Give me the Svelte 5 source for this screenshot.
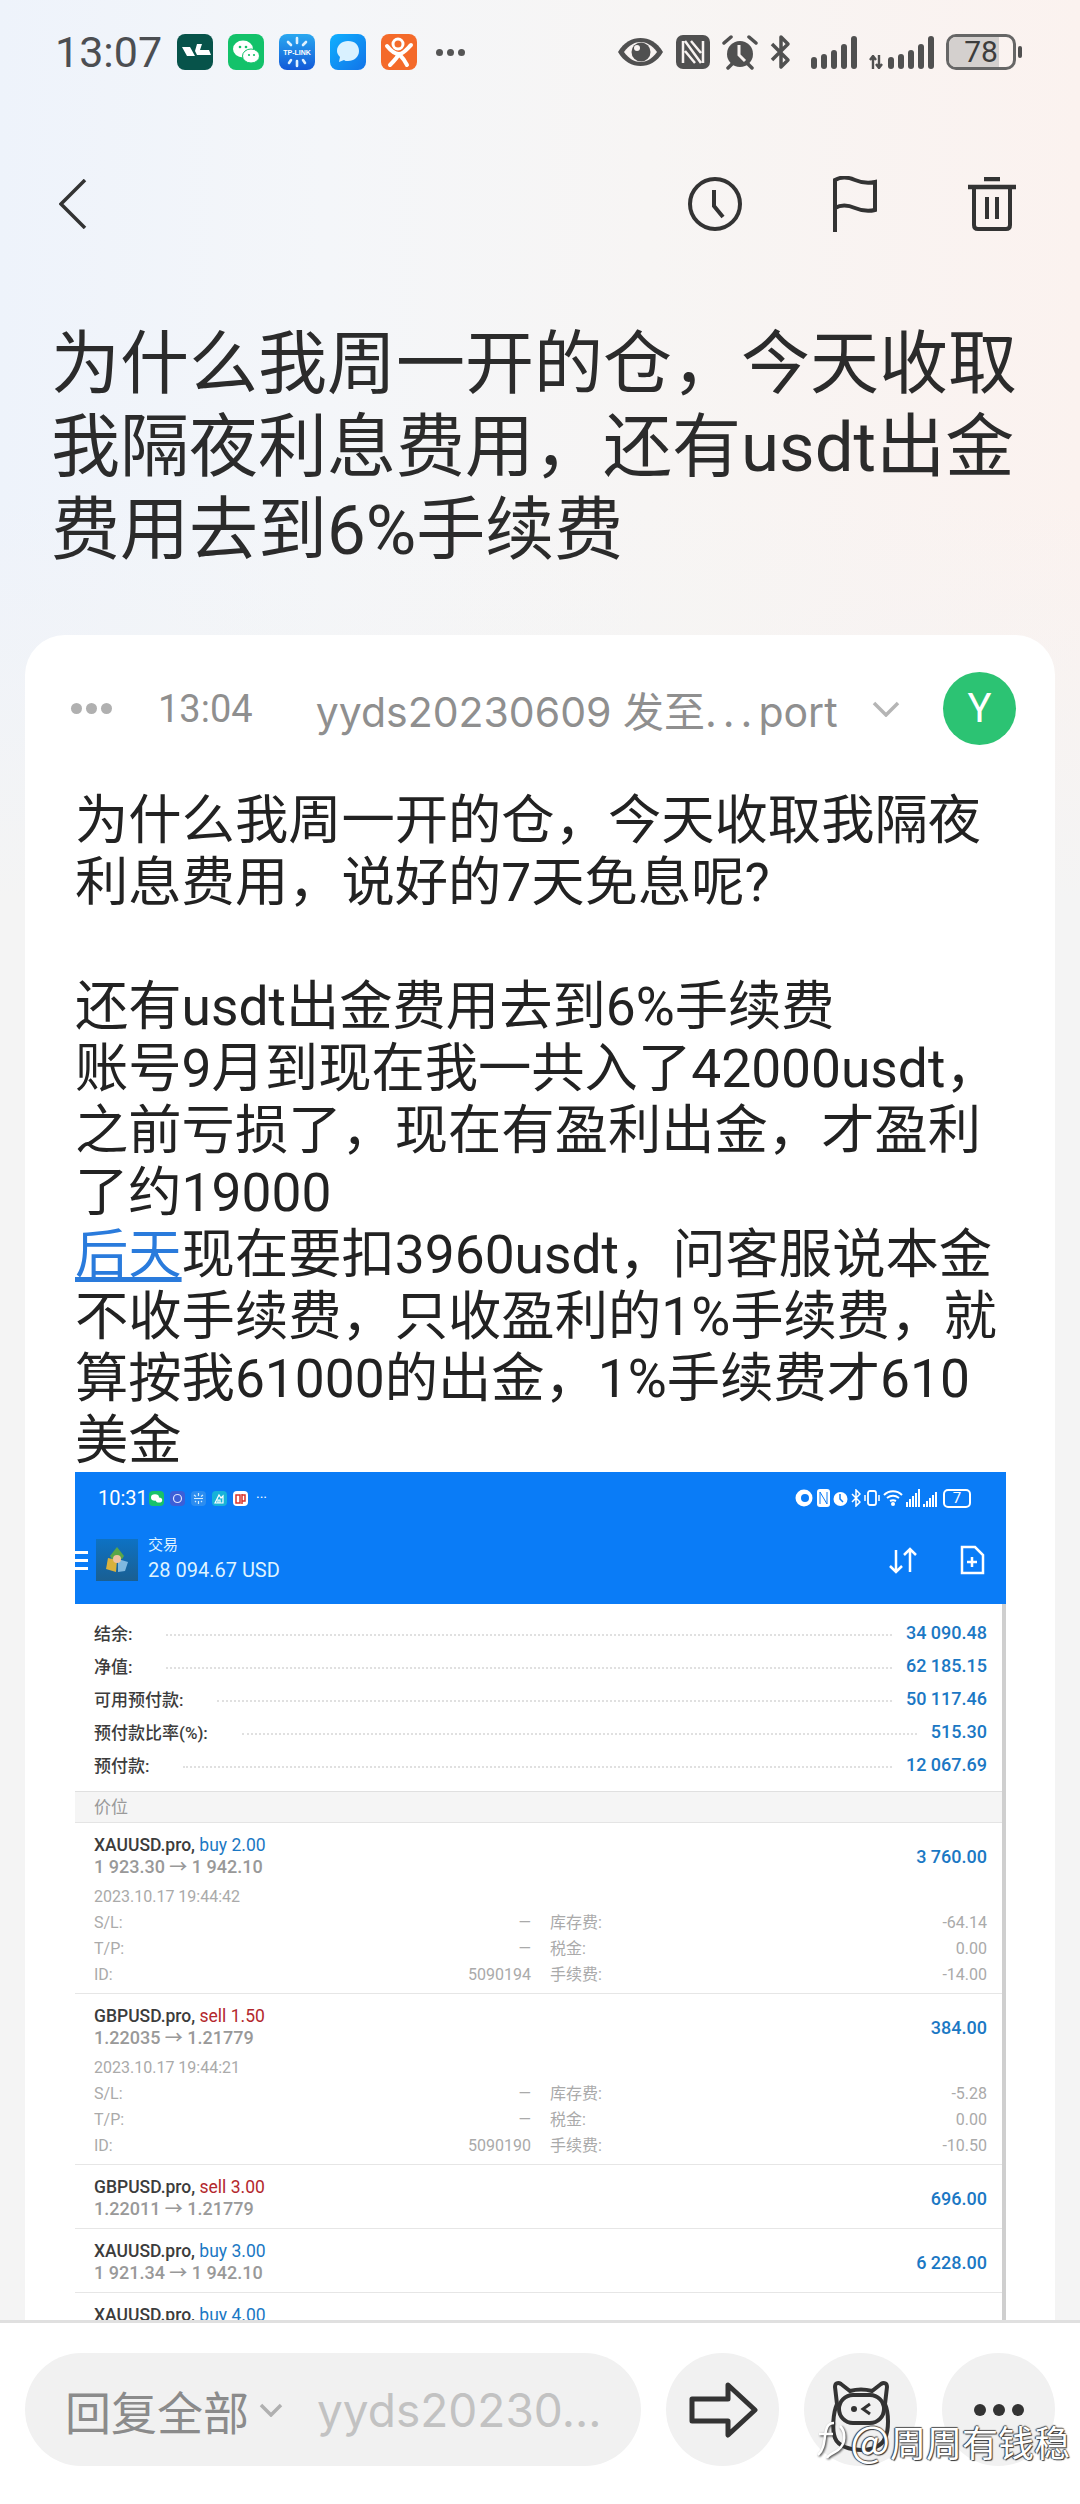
<script>
  const body = [
    '为什么我周一开的仓，今天收取我隔夜',
    '利息费用，说好的7天免息呢?',
    '',
    '还有usdt出金费用去到6%手续费',
    '账号9月到现在我一共入了42000usdt，',
    '之前亏损了，现在有盈利出金，才盈利',
    '了约19000'
  ]
  const bodyEnd = [
    '不收手续费，只收盈利的1%手续费，就',
    '算按我61000的出金，1%手续费才610',
    '美金'
  ]
  const summary = [
    ['结余:', '34 090.48'],
    ['净值:', '62 185.15'],
    ['可用预付款:', '50 117.46'],
    ['预付款比率(%):', '515.30'],
    ['预付款:', '12 067.69']
  ]
  const positions = [
    { sym: 'XAUUSD.pro,', side: 'buy', lot: '2.00', from: '1 923.30', to: '1 942.10', amount: '3 760.00',
      date: '2023.10.17 19:44:42', id: '5090194', swap: '-64.14', fee: '-14.00' },
    { sym: 'GBPUSD.pro,', side: 'sell', lot: '1.50', from: '1.22035', to: '1.21779', amount: '384.00',
      date: '2023.10.17 19:44:21', id: '5090190', swap: '-5.28', fee: '-10.50' },
    { sym: 'GBPUSD.pro,', side: 'sell', lot: '3.00', from: '1.22011', to: '1.21779', amount: '696.00' },
    { sym: 'XAUUSD.pro,', side: 'buy', lot: '3.00', from: '1 921.34', to: '1 942.10', amount: '6 228.00' },
    { sym: 'XAUUSD.pro,', side: 'buy', lot: '4.00', from: '1 921.34', to: '1 942.10', amount: '8 240.00' }
  ]
  const bars = [12, 15, 19, 25, 33]
</script>

<div class="page">
  <div class="status">
    <span class="clock">13:07</span>
    <div class="apps">
      <svg class="app" viewBox="0 0 36 36"><rect width="36" height="36" rx="8" fill="#07534a"/><path d="M5 13l8 0 5 9H10zM20 10l5 0-2 6h9l2 5H20l-2-4z" fill="#fff"/></svg>
      <svg class="app" viewBox="0 0 36 36"><rect width="36" height="36" rx="8" fill="#13c26a"/><ellipse cx="15" cy="15" rx="10" ry="8.500" fill="#fff"/><ellipse cx="23" cy="22" rx="8.500" ry="7" fill="#fff" stroke="#13c26a"/><circle cx="12" cy="13" r="1.300" fill="#13c26a"/><circle cx="18" cy="13" r="1.300" fill="#13c26a"/><circle cx="21" cy="21" r="1.100" fill="#13c26a"/><circle cx="26" cy="21" r="1.100" fill="#13c26a"/></svg>
      <svg class="app" viewBox="0 0 36 36">
        <defs><linearGradient id="tp" x1="0" y1="0" x2="0" y2="1"><stop offset="0" stop-color="#2aa8f0"/><stop offset="1" stop-color="#1259d8"/></linearGradient></defs>
        <rect width="36" height="36" rx="8" fill="url(#tp)"/>
        <g stroke="#dff1ff" stroke-width="2.600" stroke-linecap="round"><path d="M18 4v5M9 8l3 3M27 8l-3 3M18 27v5M10 29l2-3M26 29l-2-3"/></g>
        <text x="18" y="21" class="tplink">TP-LINK</text>
      </svg>
      <svg class="app" viewBox="0 0 36 36">
        <defs><linearGradient id="msg" x1="0" y1="0" x2="1" y2="1"><stop offset="0" stop-color="#0fb0ff"/><stop offset="1" stop-color="#1273e8"/></linearGradient></defs>
        <rect width="36" height="36" rx="8" fill="url(#msg)"/><path d="M18 7c7 0 11 4 11 10s-5 10-11 10c-2 0-3 0-4-1l-5 2 1-5c-2-2-3-4-3-6 0-6 5-10 11-10z" fill="#d9f1ff"/></svg>
      <svg class="app" viewBox="0 0 36 36"><rect width="36" height="36" rx="8" fill="#f46a2a"/><circle cx="17" cy="10" r="5" fill="none" stroke="#fff" stroke-width="3"/><path d="M6 12c4 5 8 8 12 8s7-4 12-9M18 20c-2 4-6 8-9 11M18 20c3 3 6 7 8 11" fill="none" stroke="#fff" stroke-width="4" stroke-linecap="round"/></svg>
    </div>
    <div class="more-dots"><i></i><i></i><i></i></div>
    <div class="sys">
      <svg width="47" height="36" viewBox="0 0 47 36"><path d="M1 18C7 8 15 4 23.500 4S40 8 46 18c-6 10-14 14-22.500 14S7 28 1 18z" fill="#505050"/><path d="M7 18c5-7 11-10 16.500-10S35 11 40 18c-5 7-11 10-16.500 10S12 25 7 18z" fill="#f8f3f1"/><circle cx="24" cy="18" r="9.500" fill="#505050"/><circle cx="20" cy="14" r="3" fill="#f8f3f1"/></svg>
      <svg width="34" height="36" viewBox="0 0 34 36"><rect width="34" height="34" y="1" rx="7" fill="#505050"/><path d="M7 7v22M27 7v22M9 7l16 22M15 7l10 12M9 17l10 12" stroke="#f8f3f1" stroke-width="2.500" fill="none"/></svg>
      <svg width="36" height="36" viewBox="0 0 36 36"><circle cx="18" cy="20" r="13" fill="#505050"/><path d="M17 11v10l6 6" stroke="#f8f3f1" stroke-width="3" fill="none"/><path d="M2 9l7-6M34 9l-7-6M6 34l4-4M30 34l-4-4" stroke="#505050" stroke-width="3.500" stroke-linecap="round"/></svg>
      <svg width="22" height="36" viewBox="0 0 22 36"><path d="M2 10l16 16-7 7V3l7 7L2 26" stroke="#505050" stroke-width="3.500" fill="none" stroke-linejoin="round"/></svg>
      <div class="bars b1">{#each bars as h}<i style="height:{h}px"></i>{/each}</div>
      <div class="bars">
        <svg class="updown" width="15" height="14" viewBox="0 0 15 14"><path d="M4 14V2M1 5l3-4 3 4M10 0v12M7 9l3 4 3-4" fill="none" stroke="#505050" stroke-width="2.400"/></svg>
        {#each bars as h}<i style="height:{h}px"></i>{/each}
      </div>
      <div class="battery"><span class="level"></span><b>78</b></div>
      <i class="nub"></i>
    </div>
  </div>

  <div class="nav">
    <svg width="28" height="50" viewBox="0 0 28 50"><path d="M26 1L2 25l24 24" fill="none" stroke="#333" stroke-width="3.500"/></svg>
    <div class="nav-right">
      <svg width="54" height="54" viewBox="0 0 54 54"><circle cx="27" cy="27" r="25" fill="none" stroke="#333" stroke-width="4"/><path d="M26 13v16l9 11" fill="none" stroke="#333" stroke-width="4"/></svg>
      <svg width="46" height="56" viewBox="0 0 46 56"><path d="M3 56V4c7-4 13-3 20 0s12 4 20 2v28c-8 2-13 1-20-2s-13-4-20 0" fill="none" stroke="#333" stroke-width="4"/></svg>
      <svg width="48" height="54" viewBox="0 0 48 54"><path d="M0 10h48M16 2h16" stroke="#333" stroke-width="4.500" fill="none"/><path d="M6 10v38c0 3 2 4 4 4h28c2 0 4-1 4-4V10M19 20v22M29 20v22" stroke="#333" stroke-width="4" fill="none"/></svg>
    </div>
  </div>

  <h1>为什么我周一开的仓，今天收取<br>我隔夜利息费用，还有usdt出金<br>费用去到6%手续费</h1>

  <div class="card">
    <div class="meta">
      <div class="meta-dots"><i></i><i></i><i></i></div>
      <span class="meta-time">13:04</span>
      <span class="meta-from">yyds20230609 发至<span class="gap-dots">...</span>port</span>
      <svg class="meta-chev" width="28" height="16" viewBox="0 0 28 16"><path d="M2 2l12 12L26 2" fill="none" stroke="#b5b5b5" stroke-width="3.500"/></svg>
      <div class="avatar">Y</div>
    </div>

    <div class="text">
      {#each body as line}
        <div class="line">{line}</div>
      {/each}
      <div class="line"><a href="#/">后天</a>现在要扣3960usdt，问客服说本金</div>
      {#each bodyEnd as line}
        <div class="line">{line}</div>
      {/each}
    </div>

    <div class="shot">
      <div class="shot-head">
        <div class="shot-status">
          <span class="shot-time">10:31</span>
          <div class="mini-apps">
            <svg viewBox="0 0 15 15"><rect width="15" height="15" rx="4" fill="#18c26a"/><ellipse cx="6" cy="6.500" rx="4" ry="3.200" fill="#fff"/><ellipse cx="10" cy="9" rx="3.200" ry="2.600" fill="#fff"/></svg>
            <svg viewBox="0 0 15 15"><rect width="15" height="15" rx="4" fill="#3c5fd8"/><circle cx="7.500" cy="7.500" r="4" fill="none" stroke="#dfe6ff" stroke-width="1.200"/></svg>
            <svg viewBox="0 0 15 15"><rect width="15" height="15" rx="4" fill="#2c8df0"/><path d="M7.500 2v3M3 4l2 1.500M12 4l-2 1.500M7.500 10v3M4 11l1-1M11 11l-1-1M3 7.500h9" stroke="#d5eeff" stroke-width="1.200"/></svg>
            <svg viewBox="0 0 15 15"><rect width="15" height="15" rx="4" fill="#18b3d8"/><path d="M3 12l4-8 2 3 2-2v7zM6 12V9h2v3" fill="none" stroke="#fff" stroke-width="1.200"/></svg>
            <svg viewBox="0 0 15 15"><rect width="15" height="15" rx="4" fill="#fff"/><path d="M3 4h4v8H3zM9 3v10M9 4h3v6H9" fill="none" stroke="#d8352e" stroke-width="1.500"/></svg>
          </div>
          <span class="ell">···</span>
          <div class="shot-sys">
            <svg width="20" height="18" viewBox="0 0 20 18"><circle cx="10" cy="9" r="8.500" fill="#fff"/><circle cx="11" cy="9" r="4" fill="#0a7cf7"/></svg>
            <svg width="13" height="18" viewBox="0 0 13 18"><rect width="13" height="18" rx="3" fill="#fff"/><path d="M3 3v12M10 3v12M3 3l7 12" stroke="#0a7cf7" fill="none"/></svg>
            <svg width="15" height="18" viewBox="0 0 15 18"><circle cx="7.500" cy="10" r="7" fill="#fff"/><path d="M7 5v5l3 3" stroke="#0a7cf7" fill="none" stroke-width="1.500"/></svg>
            <svg width="10" height="18" viewBox="0 0 10 18"><path d="M1 5l8 8-4 4V1l4 4-8 8" stroke="#fff" stroke-width="1.500" fill="none"/></svg>
            <svg width="16" height="18" viewBox="0 0 16 18"><rect x="4" y="2" width="8" height="14" rx="2" stroke="#fff" stroke-width="1.800" fill="none"/><path d="M1 6v6M15 6v6" stroke="#fff" stroke-width="1.500"/></svg>
            <svg width="20" height="18" viewBox="0 0 20 18"><path d="M1 6c5-5 13-5 18 0M4 9c4-3 8-3 12 0M7 12c2-1 4-1 6 0" stroke="#fff" stroke-width="2" fill="none"/><circle cx="10" cy="15" r="2" fill="#fff"/></svg>
            <div class="mini-bars">{#each [5, 8, 11, 14, 18] as h}<i style="height:{h}px"></i>{/each}</div>
            <div class="mini-bars">{#each [3, 6, 9, 12, 15] as h}<i style="height:{h}px"></i>{/each}</div>
            <div class="mini-batt"><b>7</b></div>
          </div>
        </div>
        <div class="shot-bar">
          <div class="burger"><i></i><i></i><i></i></div>
          <svg class="mt" width="42" height="42" viewBox="0 0 42 42">
            <defs><linearGradient id="mtbg" x1="0" y1="0" x2="0" y2="1"><stop offset="0" stop-color="#0d72c4"/><stop offset="1" stop-color="#1a5f92"/></linearGradient></defs>
            <rect width="42" height="42" fill="url(#mtbg)"/>
            <path d="M21 8l7 9-2 3H16l-2-3z" fill="#5aa648"/>
            <path d="M12 19l9 2-1 12-10-3z" fill="#d9b13c"/>
            <path d="M22 20l10 3-3 9-7 1z" fill="#7fb8e0"/>
            <circle cx="21" cy="20" r="4" fill="#f0c2a0"/>
          </svg>
          <div class="acct">
            <span class="acct-name">交易</span>
            <span class="acct-bal">28 094.67 USD</span>
          </div>
          <svg class="swap" width="30" height="28" viewBox="0 0 30 28"><path d="M8 4v22M2 20l6 6 6-6M22 26V3M16 9l6-6 6 6" fill="none" stroke="#fff" stroke-width="2.500"/></svg>
          <svg width="26" height="30" viewBox="0 0 26 30"><path d="M3 2h13l8 8v18H3zM13 12v10M8 17h10" fill="none" stroke="#fff" stroke-width="2.500"/></svg>
        </div>
      </div>

      <div class="shot-list">
        <div class="summary">
          {#each summary as [label, value]}
            <div class="sum-row">
              <span class="sum-label">{label}</span>
              <span class="leader"></span>
              <span class="sum-value">{value}</span>
            </div>
          {/each}
        </div>
        <div class="section">价位</div>
        {#each positions as p}
          <div class="pos">
            <div class="pos-head">
              <div>
                <div class="pos-title"><b>{p.sym}</b> <span class={p.side}>{p.side} {p.lot}</span></div>
                <div class="pos-price">{p.from} → {p.to}</div>
              </div>
              <span class="pos-amount">{p.amount}</span>
            </div>
            {#if p.date}
              <div class="pos-date">{p.date}</div>
              <div class="pos-grid">
                <div><span>S/L:</span><span>—</span></div>
                <div><span>库存费:</span><span>{p.swap}</span></div>
                <div><span>T/P:</span><span>—</span></div>
                <div><span>税金:</span><span>0.00</span></div>
                <div><span>ID:</span><span>{p.id}</span></div>
                <div><span>手续费:</span><span>{p.fee}</span></div>
              </div>
            {/if}
          </div>
        {/each}
      </div>
    </div>
  </div>

  <div class="bottom">
    <div class="pill">
      <span class="pill-label">回复全部</span>
      <svg width="24" height="14" viewBox="0 0 24 14"><path d="M2 2l10 10L22 2" fill="none" stroke="#b0b0b0" stroke-width="3.500"/></svg>
      <span class="pill-to">yyds20230...</span>
    </div>
    <div class="round">
      <svg width="70" height="56" viewBox="0 0 70 56"><path d="M4 17h36V3l27 25-27 25V39H4z" fill="none" stroke="#333" stroke-width="5" stroke-linejoin="round"/></svg>
    </div>
    <div class="round">
      <svg class="pig" width="64" height="72" viewBox="0 0 64 72"><path d="M8 24L6 7c0-4 3-5 6-3l9 7c7-2 15-2 22 0l9-7c3-2 6-1 6 3l-2 17c4 9 4 26 0 34-3 8-13 12-24 12S9 66 6 58C3 50 4 33 8 24z" fill="none" stroke="#333" stroke-width="4"/><rect x="10" y="15" width="45" height="28" rx="14" fill="none" stroke="#333" stroke-width="4"/><circle cx="25" cy="29" r="3" fill="#333"/><path d="M41 24l-7 5 7 5" fill="none" stroke="#333" stroke-width="3"/></svg>
    </div>
    <div class="round round-dots"><i></i><i></i><i></i></div>
  </div>

  <div class="watermark">
    <svg width="36" height="40" viewBox="0 0 36 40"><path d="M20 3C13 3 12 9 11 16c-1 8-2 15-7 19M5 14h14" fill="none" stroke="#fff" stroke-width="2.500"/><path d="M26 6c6 6 6 18-2 24-4 3-10 5-11 8" fill="none" stroke="#fff" stroke-width="2.500"/></svg>
    <span><span class="at">@</span>周周有钱稳</span>
  </div>
</div>

<style>
  :global(body) {
    margin: 0;
  }
  .page {
    position: relative;
    width: 1080px;
    height: 2504px;
    overflow: hidden;
    display: flex;
    flex-direction: column;
    font-family: "Roboto", "Noto Sans CJK SC", sans-serif;
    background:
      linear-gradient(to bottom, rgba(244,244,244,0) 0, rgba(244,244,244,0) 500px, #f4f4f4 900px),
      linear-gradient(to right, #eef3fb 0%, #f4f6f9 30%, #f7f5f4 60%, #fbf2ef 100%);
  }
  i { display: block; }

  /* status bar */
  .status {
    height: 104px;
    flex: none;
    display: flex;
    align-items: center;
    padding: 0 58px 0 55px;
    box-sizing: border-box;
  }
  .clock {
    font-size: 43px;
    color: #4c4e52;
    width: 122px;
  }
  .apps {
    display: flex;
    gap: 15px;
  }
  .app {
    width: 36px;
    height: 36px;
    display: block;
  }
  .tplink {
    font: bold 7px "Liberation Sans", sans-serif;
    fill: #fff;
    text-anchor: middle;
  }
  .more-dots {
    display: flex;
    gap: 4px;
    margin-left: 19px;
  }
  .more-dots i {
    width: 7px;
    height: 7px;
    border-radius: 50%;
    background: #555;
  }
  .sys {
    margin-left: auto;
    display: flex;
    align-items: center;
    gap: 12px;
  }
  .sys svg { display: block; }
  .bars {
    display: flex;
    align-items: flex-end;
    gap: 4px;
    height: 33px;
  }
  .bars i {
    width: 6px;
    border-radius: 3px;
    background: #505050;
  }
  .b1 { margin-left: 7px; }
  .battery {
    position: relative;
    width: 70px;
    height: 36px;
    box-sizing: border-box;
    border: 3px solid #666;
    border-radius: 10px;
    overflow: hidden;
    text-align: center;
  }
  .level {
    position: absolute;
    inset: 0 22% 0 0;
    background: #d4d0ce;
  }
  .battery b {
    position: relative;
    font-size: 30px;
    line-height: 30px;
    font-weight: 400;
    color: #3d3d3d;
  }
  .nub {
    width: 4px;
    height: 12px;
    margin-left: -10px;
    background: #505050;
    border-radius: 2px;
  }

  /* nav */
  .nav {
    height: 100px;
    flex: none;
    margin-top: 50px;
    display: flex;
    align-items: center;
    justify-content: space-between;
    padding: 0 64px 0 59px;
  }
  .nav-right {
    display: flex;
    align-items: center;
    gap: 90px;
  }
  .nav svg { display: block; }

  h1 {
    flex: none;
    margin: 69px 0 63px 51px;
    font-size: 69px;
    line-height: 83px;
    font-weight: 400;
    color: #2b2b2b;
    white-space: nowrap;
  }

  /* mail card */
  .card {
    flex: 1;
    min-height: 0;
    margin: 0 25px;
    padding: 37px 47px 0 50px;
    background: #fff;
    border-radius: 40px 40px 0 0;
    overflow: hidden;
  }
  .meta {
    height: 73px;
    display: flex;
    align-items: center;
    color: #8f8f8f;
    margin-right: -8px;
  }
  .meta-dots {
    display: flex;
    gap: 4px;
    margin-left: -4px;
  }
  .meta-dots i {
    width: 11px;
    height: 11px;
    border-radius: 50%;
    background: #b0b0b0;
  }
  .meta-time {
    font-size: 38px;
    margin-left: 46px;
  }
  .meta-from {
    font-family: "Inter", "Noto Sans CJK SC", sans-serif;
    font-size: 41px;
    margin-left: 63px;
    white-space: nowrap;
  }
  .gap-dots { letter-spacing: 6px; }
  .meta-chev { margin-left: 34px; }
  .avatar {
    width: 73px;
    height: 73px;
    margin-left: auto;
    border-radius: 50%;
    background: #2cc373;
    color: #fff;
    font-size: 40px;
    display: flex;
    align-items: center;
    justify-content: center;
  }
  .text {
    margin-top: 45px;
    font-size: 53.3px;
    line-height: 62px;
    color: #222;
  }
  .line {
    min-height: 62px;
    white-space: nowrap;
  }
  .line a {
    color: #2a7bdc;
    text-decoration: underline;
    text-underline-offset: 4px;
  }

  /* embedded screenshot */
  .shot {
    width: 931px;
    font-size: 18px;
    color: #8c8c8c;
  }
  .shot-head {
    height: 132px;
    background: #0a7cf7;
    color: #fff;
  }
  .shot-status {
    height: 52px;
    display: flex;
    align-items: center;
    padding: 0 35px 0 23px;
    font-size: 20px;
  }
  .shot-time { width: 51px; }
  .mini-apps {
    display: flex;
    gap: 6px;
  }
  .mini-apps svg {
    display: block;
    width: 15px;
    height: 15px;
  }
  .ell {
    font-size: 14px;
    margin-left: 8px;
  }
  .shot-sys {
    margin-left: auto;
    display: flex;
    align-items: center;
    gap: 3px;
  }
  .shot-sys svg { display: block; }
  .mini-bars {
    display: flex;
    align-items: flex-end;
    gap: 1px;
    height: 18px;
  }
  .mini-bars i {
    width: 2px;
    background: #fff;
  }
  .mini-batt {
    width: 28px;
    height: 19px;
    margin-left: 3px;
    box-sizing: border-box;
    border: 2px solid #fff;
    border-radius: 5px;
    font-size: 15px;
    line-height: 15px;
    text-align: center;
  }
  .mini-batt b { font-weight: 400; }
  .shot-bar {
    height: 60px;
    display: flex;
    align-items: center;
    padding-right: 21px;
    margin-top: 6px;
  }
  .burger {
    width: 13px;
    margin-right: 8px;
  }
  .burger i {
    height: 3px;
    margin: 5px 0;
    background: #fff;
  }
  .mt { display: block; }
  .acct {
    margin-left: 10px;
    display: flex;
    flex-direction: column;
    flex: 1;
    color: #dff3ff;
  }
  .acct-name {
    font-size: 15px;
    line-height: 20px;
  }
  .acct-bal {
    font-size: 20px;
    line-height: 30px;
  }
  .swap { margin-right: 41px; }

  .shot-list {
    border-right: 4px solid #cfcfcf;
  }
  .summary {
    padding: 12px 15px 10px 19px;
  }
  .sum-row {
    height: 33px;
    display: flex;
    align-items: center;
  }
  .sum-label {
    color: #3c3c3c;
    font-size: 17px;
    font-weight: 500;
  }
  .leader {
    flex: 1;
    margin: 5px 14px 0 34px;
    border-bottom: 2px dotted #e0e0e0;
  }
  .sum-value, .pos-amount {
    color: #1b78c4;
    font-weight: 500;
    font-size: 18px;
  }
  .section {
    height: 32px;
    line-height: 30px;
    box-sizing: border-box;
    padding-left: 19px;
    background: #f5f5f5;
    border-top: 1px solid #e0e0e0;
    border-bottom: 1px solid #e4e4e4;
    color: #9a9a9a;
    font-size: 17px;
  }
  .pos {
    padding: 11px 15px 8px 19px;
    border-bottom: 1px solid #e6e6e6;
  }
  .pos-head {
    display: flex;
    align-items: center;
    justify-content: space-between;
  }
  .pos-title {
    line-height: 22px;
    font-size: 17.5px;
  }
  .pos-title b {
    font-weight: 500;
    color: #3c3c3c;
  }
  .buy { color: #1b78c4; }
  .sell { color: #b3282d; }
  .pos-price {
    line-height: 22px;
    font-size: 18px;
    font-weight: 500;
    color: #999;
  }
  .pos-date {
    margin-top: 6px;
    height: 26px;
    line-height: 26px;
    font-size: 16px;
    color: #aaa;
  }
  .pos-grid {
    display: grid;
    grid-template-columns: 1fr 1fr;
    column-gap: 19px;
    font-size: 16px;
    color: #aaa;
    margin-bottom: -3px;
  }
  .pos-grid div {
    height: 26px;
    line-height: 26px;
    display: flex;
    justify-content: space-between;
  }

  /* reply bar */
  .bottom {
    position: relative;
    flex: none;
    height: 184px;
    box-sizing: border-box;
    border-top: 3px solid #e0e0e0;
    background: #fff;
    display: flex;
    gap: 25px;
    padding: 30px 25px 0;
  }
  .pill {
    width: 616px;
    height: 113px;
    flex: none;
    box-sizing: border-box;
    border-radius: 57px;
    background: #f1f1f1;
    display: flex;
    align-items: center;
    padding-left: 40px;
  }
  .pill svg { margin-left: 10px; }
  .pill-label {
    font-size: 46px;
    color: #8b8b8b;
  }
  .pill-to {
    font-family: "Inter", sans-serif;
    font-size: 46px;
    color: #c2c2c2;
    margin-left: 34px;
  }
  .round {
    width: 113px;
    height: 113px;
    border-radius: 50%;
    background: #f1f1f1;
    display: flex;
    align-items: center;
    justify-content: center;
    flex: none;
  }
  .pig {
    margin-top: 12px;
  }
  .round-dots { gap: 7px; }
  .round-dots i {
    width: 12px;
    height: 12px;
    border-radius: 50%;
    background: #333;
  }
  .watermark {
    position: absolute;
    right: 10px;
    bottom: 41px;
    display: flex;
    align-items: center;
    gap: 0;
    color: #fff;
    font-family: "Noto Sans CJK SC", sans-serif;
    font-size: 36px;
    line-height: 44px;
    text-shadow: -1px 0 1px #333, 1px 1px 1px #333, 0 -1px 1px #555;
  }
  .at { font-size: 42px; }
  .watermark svg {
    display: block;
    filter: drop-shadow(1px 1px 1px #333);
  }
</style>
